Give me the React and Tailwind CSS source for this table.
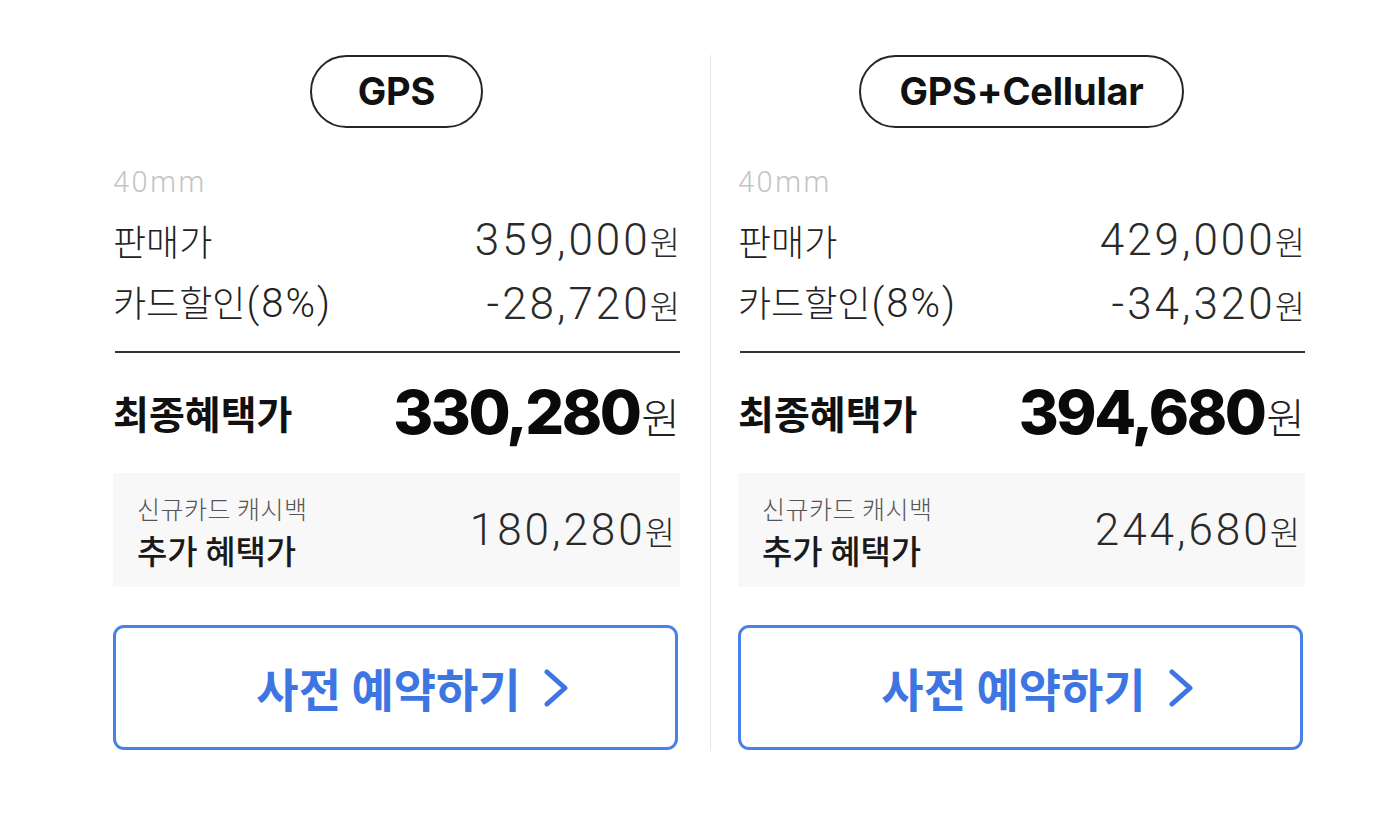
import React from 'react';

const KR = "font-['Noto_Sans_CJK_KR',sans-serif]";
const NUM = "font-['Roboto','Noto_Sans_CJK_KR',sans-serif]";

const plans = [
  {
    name: 'GPS',
    price: '359,000',
    discount: '-28,720',
    final: '330,280',
    cashback: '180,280',
  },
  {
    name: 'GPS+Cellular',
    price: '429,000',
    discount: '-34,320',
    final: '394,680',
    cashback: '244,680',
  },
];

function Won({ className = '' }) {
  return <span className={`${KR} font-light ${className}`}>원</span>;
}

function Amount({ value }) {
  return (
    <span className="flex items-baseline">
      <span className={`${NUM} font-light text-[44px] leading-none text-[#2a2a2a] tracking-[3px]`}>{value}</span>
      <Won className="text-[33px] leading-none text-[#2a2a2a] -ml-[1px]" />
    </span>
  );
}

function PriceRow({ label, extra, value }) {
  return (
    <div className="h-[64px] flex items-center justify-between">
      <span className={`${KR} font-light text-[36px] text-[#222] flex items-baseline`}>
        {label}
        {extra && <span className={`${NUM} font-light text-[40px] tracking-[2px] ml-[1px]`}>{extra}</span>}
      </span>
      <Amount value={value} />
    </div>
  );
}

function Plan({ plan }) {
  return (
    <div className="w-[567px] flex flex-col">
      <div className="flex justify-center">
        <div className="h-[73px] min-w-[173px] px-[38px] rounded-full border-2 border-[#262626] flex items-center justify-center">
          <span className="font-['Inter',sans-serif] font-bold text-[38px] text-[#111] tracking-[-0.2px]">{plan.name}</span>
        </div>
      </div>

      <div className={`${NUM} font-light text-[29px] leading-[36px] text-[#c4c4c4] mt-[36px] tracking-[2.5px]`}>40mm</div>

      <div className="mt-[8px]">
        <PriceRow label="판매가" value={plan.price} />
        <PriceRow label="카드할인" extra="(8%)" value={plan.discount} />
      </div>

      <div className="h-[2px] bg-[#333] mt-[15px] ml-[2px]" />

      <div className="h-[118px] flex items-center justify-between">
        <span className={`${KR} font-bold text-[39px] text-[#111]`}>최종혜택가</span>
        <span className="flex items-baseline">
          <span className="font-['Inter',sans-serif] font-extrabold text-[61px] leading-none text-[#0a0a0a] tracking-[-2.5px]">{plan.final}</span>
          <Won className="text-[42px] leading-none text-[#222] ml-[2px]" />
        </span>
      </div>

      <div className="mt-[2px] h-[114px] bg-[#f8f8f8] flex items-center justify-between pl-[24px] pr-[5px]">
        <div className={`${KR} flex flex-col pt-[4px]`}>
          <span className="font-light text-[25px] leading-[36px] text-[#555] tracking-[0.5px]">신규카드 캐시백</span>
          <span className="font-medium text-[33px] leading-[48px] text-[#1a1a1a]">추가 혜택가</span>
        </div>
        <Amount value={plan.cashback} />
      </div>

      <button className="mt-[38px] h-[125px] w-[565px] rounded-[11px] border-[3px] border-[#4a80ea] bg-white flex items-center justify-center gap-[22px] pl-[36px]">
        <span className={`${KR} font-bold text-[46px] text-[#3d75e3]`}>사전 예약하기</span>
        <svg width="28" height="38" viewBox="0 0 28 38" fill="none">
          <path d="M4 3 L22 19 L4 35" stroke="#3d75e3" strokeWidth="5" strokeLinecap="round" strokeLinejoin="round" />
        </svg>
      </button>
    </div>
  );
}

export default function App() {
  return (
    <div className="w-[1388px] h-[818px] bg-white flex pl-[113px] pt-[55px]">
      <Plan plan={plans[0]} />
      <div className="w-px h-[696px] bg-[#e6e6e6] ml-[30px] mr-[27px]" />
      <Plan plan={plans[1]} />
    </div>
  );
}
